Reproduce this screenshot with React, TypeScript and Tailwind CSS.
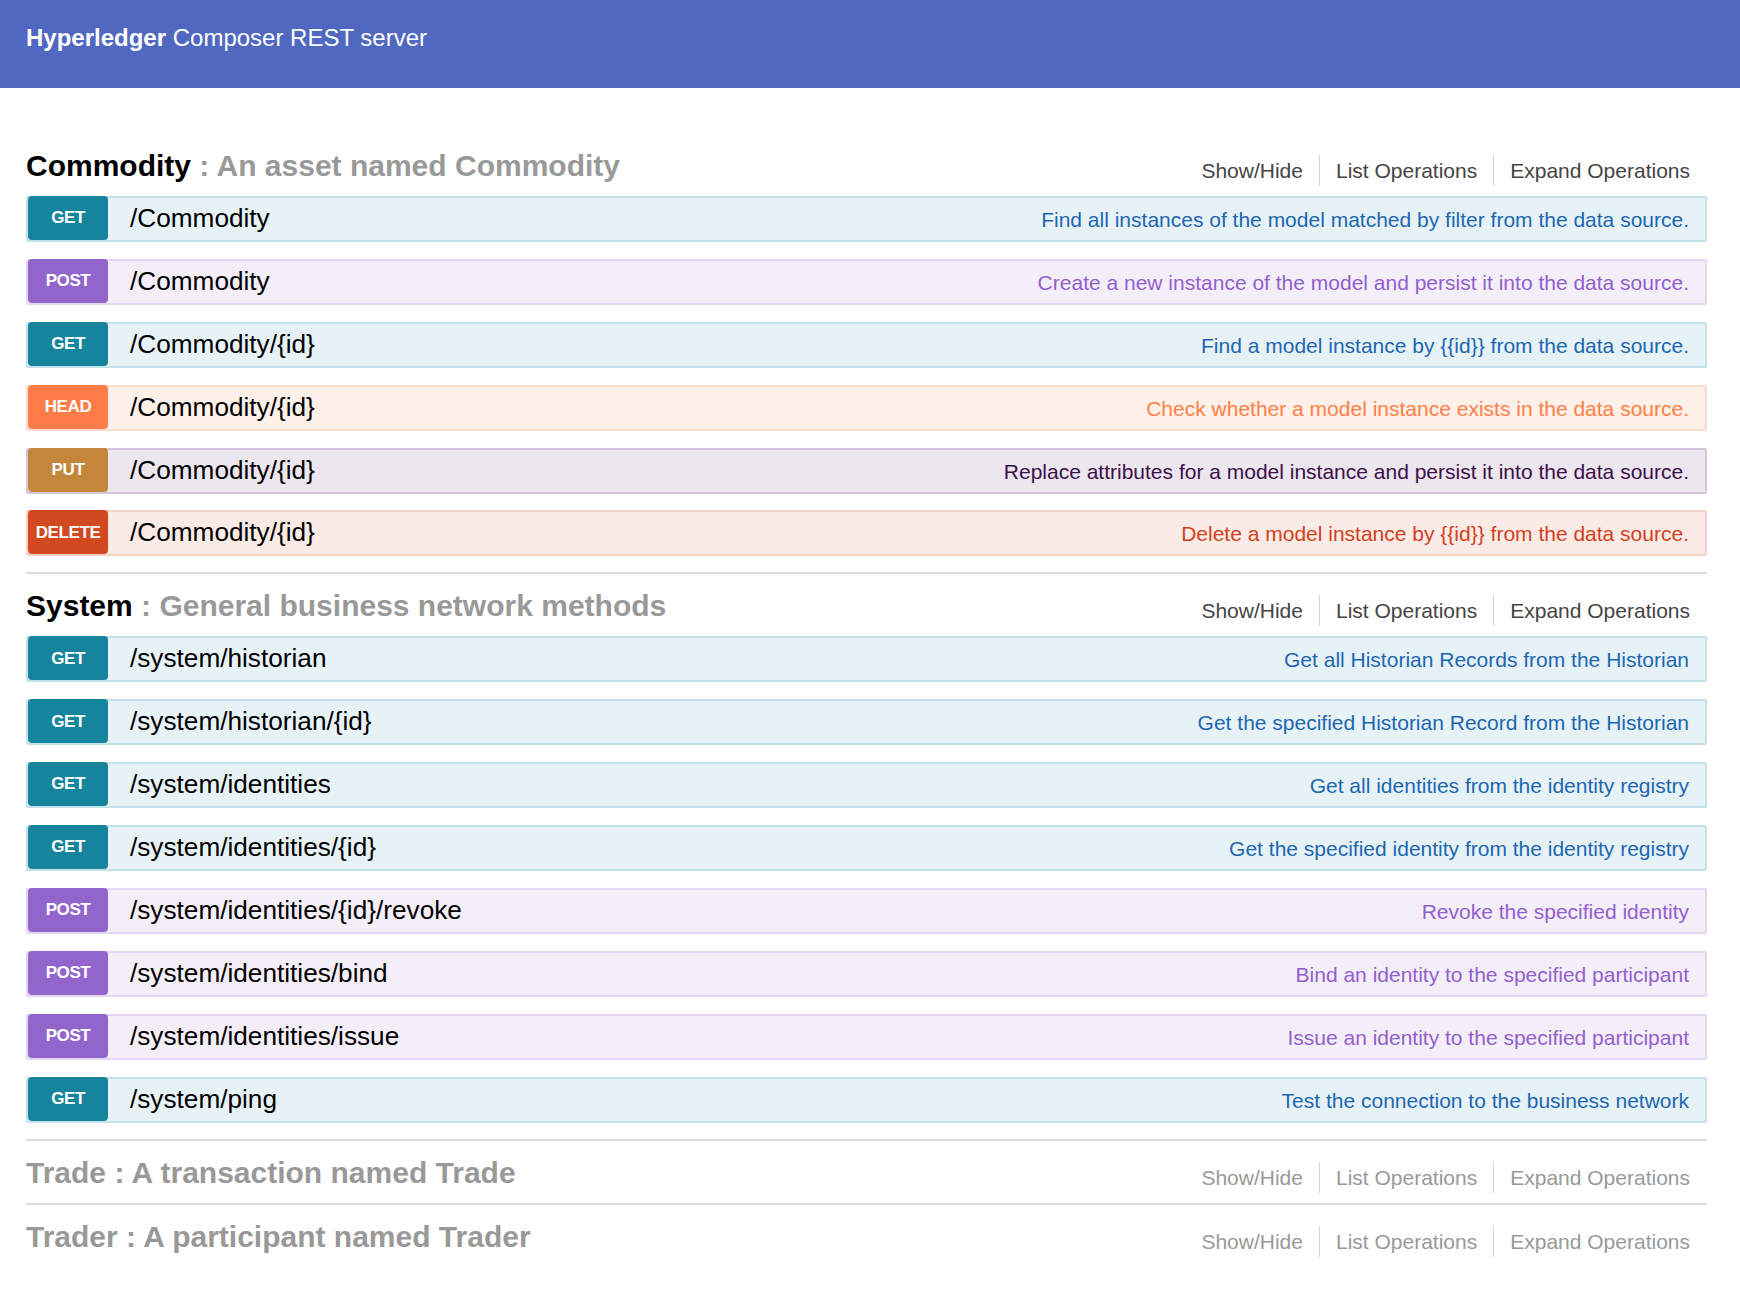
import React from "react";

type Method = "GET" | "POST" | "HEAD" | "PUT" | "DELETE";

const methodStyles: Record<Method, { badge: string; row: string; desc: string }> = {
  GET: {
    badge: "bg-[#17849e]",
    row: "bg-[#e7f2f7] border-[#c3e1e9]",
    desc: "text-[#1d67b1]",
  },
  POST: {
    badge: "bg-[#9165cc]",
    row: "bg-[#f4eef9] border-[#e4d7f3]",
    desc: "text-[#935fcf]",
  },
  HEAD: {
    badge: "bg-[#ff7c48]",
    row: "bg-[#fff0ea] border-[#fcdcce]",
    desc: "text-[#ff7f45]",
  },
  PUT: {
    badge: "bg-[#c4863a]",
    row: "bg-[#ece6ee] border-[#d2c4d9]",
    desc: "text-[#3d0f4b]",
  },
  DELETE: {
    badge: "bg-[#d2491f]",
    row: "bg-[#fbebe6] border-[#f5d2c6]",
    desc: "text-[#d4401c]",
  },
};

type Operation = { method: Method; path: string; summary: string };

type Section = {
  name: string;
  description: string;
  open: boolean;
  operations: Operation[];
};

const sections: Section[] = [
  {
    name: "Commodity",
    description: "An asset named Commodity",
    open: true,
    operations: [
      { method: "GET", path: "/Commodity", summary: "Find all instances of the model matched by filter from the data source." },
      { method: "POST", path: "/Commodity", summary: "Create a new instance of the model and persist it into the data source." },
      { method: "GET", path: "/Commodity/{id}", summary: "Find a model instance by {{id}} from the data source." },
      { method: "HEAD", path: "/Commodity/{id}", summary: "Check whether a model instance exists in the data source." },
      { method: "PUT", path: "/Commodity/{id}", summary: "Replace attributes for a model instance and persist it into the data source." },
      { method: "DELETE", path: "/Commodity/{id}", summary: "Delete a model instance by {{id}} from the data source." },
    ],
  },
  {
    name: "System",
    description: "General business network methods",
    open: true,
    operations: [
      { method: "GET", path: "/system/historian", summary: "Get all Historian Records from the Historian" },
      { method: "GET", path: "/system/historian/{id}", summary: "Get the specified Historian Record from the Historian" },
      { method: "GET", path: "/system/identities", summary: "Get all identities from the identity registry" },
      { method: "GET", path: "/system/identities/{id}", summary: "Get the specified identity from the identity registry" },
      { method: "POST", path: "/system/identities/{id}/revoke", summary: "Revoke the specified identity" },
      { method: "POST", path: "/system/identities/bind", summary: "Bind an identity to the specified participant" },
      { method: "POST", path: "/system/identities/issue", summary: "Issue an identity to the specified participant" },
      { method: "GET", path: "/system/ping", summary: "Test the connection to the business network" },
    ],
  },
  { name: "Trade", description: "A transaction named Trade", open: false, operations: [] },
  { name: "Trader", description: "A participant named Trader", open: false, operations: [] },
];

const OperationRow: React.FC<{ op: Operation }> = ({ op }) => {
  const s = methodStyles[op.method];
  return (
    <div className={`flex h-[46px] border-2 rounded-[2px] ${s.row}`}>
      <span
        className={`-mt-[2px] flex h-[44px] w-[80px] shrink-0 items-center justify-center rounded-[4px] text-[17px] font-bold tracking-[-0.4px] text-white ${s.badge}`}
      >
        {op.method}
      </span>
      <div className="flex flex-1 items-center">
        <div className="flex flex-1 items-baseline">
          <span className="pl-[22px] text-[26.2px] leading-[30px] text-black">{op.path}</span>
          <span className={`ml-auto pr-[16px] text-[21px] leading-[30px] ${s.desc}`}>
            {op.summary}
          </span>
        </div>
      </div>
    </div>
  );
};

const SectionBlock: React.FC<{ section: Section; first: boolean }> = ({ section, first }) => {
  const linkColor = section.open ? "text-[#444]" : "text-[#999]";
  return (
    <div className={first ? "" : "border-t-2 border-[#ddd]"}>
      <div className="flex h-[62px] items-baseline justify-between pt-[17px]">
        <h2 className="text-[30px] font-bold leading-[30px]">
          <span className={section.open ? "text-black" : "text-[#999]"}>{section.name}</span>
          <span className="text-[#999]"> : {section.description}</span>
        </h2>
        <div
          className={`flex translate-y-[2px] items-baseline pr-[17px] text-[21px] leading-[31px] ${linkColor}`}
        >
          <span className="pr-4">Show/Hide</span>
          <span className="border-l border-[#d4d4d4] px-4">List Operations</span>
          <span className="border-l border-[#d4d4d4] pl-4">Expand Operations</span>
        </div>
      </div>
      {section.open && (
        <div className="flex flex-col gap-[16.9px] pb-4">
          {section.operations.map((op, i) => (
            <OperationRow key={i} op={op} />
          ))}
        </div>
      )}
    </div>
  );
};

export default function App() {
  return (
    <div className="min-h-screen bg-white font-['Liberation_Sans',Arial,Helvetica,sans-serif]">
      {/* Header */}
      <div className="h-[88px] bg-[#5068c0] pl-[26px] pt-[24px]">
        <div className="text-[24px] leading-[28px] text-white">
          <span className="font-bold">Hyperledger</span> Composer REST server
        </div>
      </div>

      <div className="mt-[46px] pl-[26px] pr-[33px]">
        {sections.map((section, i) => (
          <SectionBlock key={section.name} section={section} first={i === 0} />
        ))}
      </div>
    </div>
  );
}
